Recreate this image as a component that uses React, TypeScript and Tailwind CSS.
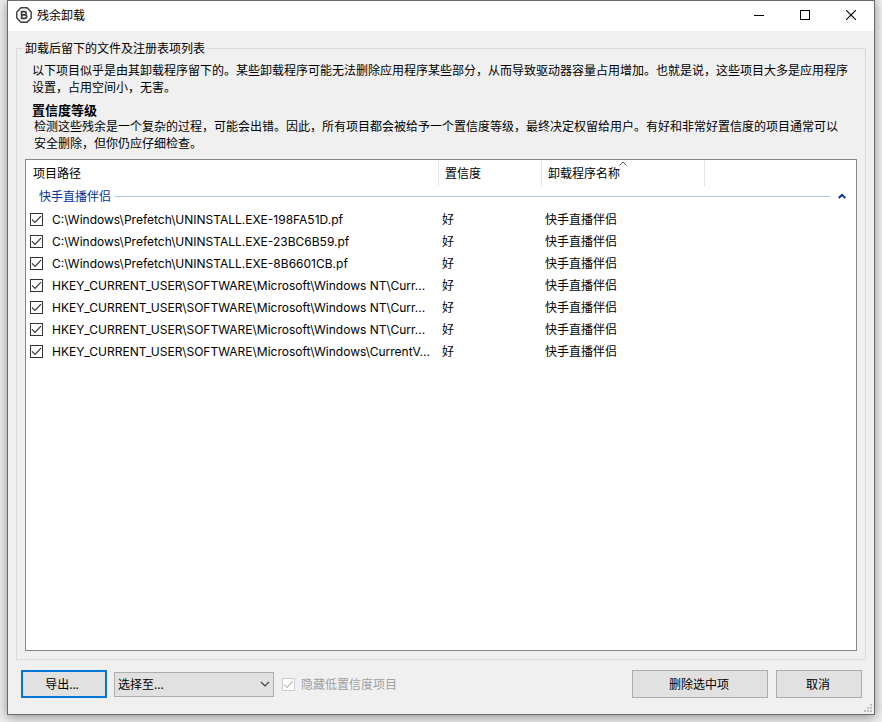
import * as React from "react";

type Leftover = {
  id: number;
  path: string;
  confidence: string;
  uninstaller: string;
};

const GROUP = "快手直播伴侣";

const LEFTOVERS: Leftover[] = [
  { id: 1, path: "C:\\Windows\\Prefetch\\UNINSTALL.EXE-198FA51D.pf", confidence: "好", uninstaller: GROUP },
  { id: 2, path: "C:\\Windows\\Prefetch\\UNINSTALL.EXE-23BC6B59.pf", confidence: "好", uninstaller: GROUP },
  { id: 3, path: "C:\\Windows\\Prefetch\\UNINSTALL.EXE-8B6601CB.pf", confidence: "好", uninstaller: GROUP },
  { id: 4, path: "HKEY_CURRENT_USER\\SOFTWARE\\Microsoft\\Windows NT\\Curr...", confidence: "好", uninstaller: GROUP },
  { id: 5, path: "HKEY_CURRENT_USER\\SOFTWARE\\Microsoft\\Windows NT\\Curr...", confidence: "好", uninstaller: GROUP },
  { id: 6, path: "HKEY_CURRENT_USER\\SOFTWARE\\Microsoft\\Windows NT\\Curr...", confidence: "好", uninstaller: GROUP },
  { id: 7, path: "HKEY_CURRENT_USER\\SOFTWARE\\Microsoft\\Windows\\CurrentV...", confidence: "好", uninstaller: GROUP },
];

function AppIcon() {
  return (
    <svg width="16" height="16" viewBox="0 0 16 16" fill="none" aria-hidden="true">
      <path d="M5 .8h6L15.2 5v6L11 15.2H5L.8 11V5z" stroke="#3a3a3a" strokeWidth="1.4" />
      <path
        d="M5.6 4.7h3.1a1.5 1.5 0 0 1 0 3.1H5.6zM5.6 7.9h3.4a1.7 1.7 0 0 1 0 3.4H5.6z"
        stroke="#3a3a3a"
        strokeWidth="1.7"
      />
    </svg>
  );
}

function CheckBox(props: React.ComponentProps<"input">) {
  return (
    <span className="relative flex size-[13px] shrink-0">
      <input
        type="checkbox"
        className="peer size-[13px] appearance-none border border-[#333] bg-white disabled:border-[#ccc]"
        {...props}
      />
      <svg
        className="pointer-events-none absolute inset-0 hidden text-[#333] peer-checked:block peer-disabled:text-[#bbb]"
        width="13"
        height="13"
        viewBox="0 0 13 13"
        fill="none"
        aria-hidden="true"
      >
        <path d="M2 6.3l3 3 6-6.1" stroke="currentColor" strokeWidth="1.2" />
      </svg>
    </span>
  );
}

function TitleBar() {
  return (
    <header className="flex h-[30px] shrink-0 items-center bg-white pb-[2px] pl-2">
      <AppIcon />
      <h1 className="pl-[5px] text-[12px]">残余卸载</h1>
      <div className="ml-auto flex h-full">
        <button type="button" aria-label="最小化" className="flex w-[46px] items-center justify-center">
          <svg width="10" height="10" viewBox="0 0 10 10" shapeRendering="crispEdges">
            <path d="M0 5.5h10" stroke="#000" />
          </svg>
        </button>
        <button type="button" aria-label="最大化" className="flex w-[46px] items-center justify-center">
          <svg width="10" height="10" viewBox="0 0 10 10" fill="none" shapeRendering="crispEdges">
            <path d="M.5.5h9v9h-9z" stroke="#000" />
          </svg>
        </button>
        <button type="button" aria-label="关闭" className="flex w-[46px] items-center justify-center">
          <svg width="10" height="10" viewBox="0 0 10 10">
            <path d="M0 0l10 10M10 0L0 10" stroke="#000" strokeWidth="1.1" />
          </svg>
        </button>
      </div>
    </header>
  );
}

function LeftoverTable() {
  const [selected, setSelected] = React.useState(() => LEFTOVERS.map((item) => item.id));

  const toggle = (id: number) =>
    setSelected((ids) => (ids.includes(id) ? ids.filter((x) => x !== id) : [...ids, id]));

  return (
    <div className="flex-1 overflow-hidden border border-[#828790] bg-white">
      <table className="w-full table-fixed border-collapse text-left">
        <colgroup>
          <col className="w-[413px]" />
          <col className="w-[103px]" />
          <col className="w-[163px]" />
          <col />
        </colgroup>
        <thead>
          <tr className="h-[26px]">
            <th className="p-0 font-normal">
              <div className="flex h-[26px] items-center border-r border-[#e5e5e5] pl-[7px]">项目路径</div>
            </th>
            <th className="p-0 font-normal">
              <div className="flex h-[26px] items-center border-r border-[#e5e5e5] pl-[6px]">置信度</div>
            </th>
            <th className="p-0 font-normal" aria-sort="ascending">
              <div className="relative flex h-[26px] items-center border-r border-[#e5e5e5] pl-[6px]">
                卸载程序名称
                <svg
                  className="absolute top-px left-1/2 -translate-x-1/2"
                  width="8"
                  height="5"
                  viewBox="0 0 8 5"
                  fill="none"
                >
                  <path d="M.5 4.5L4 1l3.5 3.5" stroke="#555" />
                </svg>
              </div>
            </th>
            <td className="p-0" />
          </tr>
        </thead>
        <tbody>
          <tr className="h-[22px]">
            <th colSpan={4} scope="colgroup" className="p-0 align-top font-normal">
              <div className="flex h-5 items-center gap-1 pr-[10px] pl-[13px]">
                <span className="text-[#003399]">{GROUP}</span>
                <span className="h-px flex-1 bg-[#b0c4de]" />
                <button type="button" aria-label="折叠" className="pl-1">
                  <svg width="8" height="6" viewBox="0 0 8 6" fill="none">
                    <path d="M.8 5L4 1.8 7.2 5" stroke="#003399" strokeWidth="2" />
                  </svg>
                </button>
              </div>
            </th>
          </tr>
          {LEFTOVERS.map((item) => (
            <tr key={item.id} className="h-[22px]">
              <td className="p-0">
                <label className="flex items-center gap-[9px] pl-1">
                  <CheckBox checked={selected.includes(item.id)} onChange={() => toggle(item.id)} />
                  <span className="pt-px font-['Inter','Noto_Sans_CJK_SC',sans-serif] whitespace-nowrap">
                    {item.path}
                  </span>
                </label>
              </td>
              <td className="p-0 pl-[3px]">{item.confidence}</td>
              <td className="p-0 pl-[3px]">{item.uninstaller}</td>
              <td className="p-0" />
            </tr>
          ))}
        </tbody>
      </table>
    </div>
  );
}

function Footer() {
  return (
    <footer className="flex shrink-0 items-center gap-2 pt-[10px] pr-3 pb-4 pl-[13px]">
      <div className="flex items-center gap-[7px]">
        <button type="button" className="h-7 w-[86px] border-2 border-[#0078d7] bg-[#e1e1e1] pr-1">
          导出...
        </button>
        <div className="relative">
          <select
            aria-label="选择至"
            className="block h-[25px] w-[160px] appearance-none border border-[#adadad] bg-[#e1e1e1] pl-[3px]"
          >
            <option>选择至...</option>
          </select>
          <svg
            className="pointer-events-none absolute top-[9px] right-1"
            width="10"
            height="7"
            viewBox="0 0 10 7"
            fill="none"
            aria-hidden="true"
          >
            <path d="M1 1l4 4 4-4" stroke="#444" strokeWidth="1.2" />
          </svg>
        </div>
        <label className="flex items-center gap-[6px] pl-px text-[#a0a0a0]">
          <CheckBox defaultChecked disabled />
          隐藏低置信度项目
        </label>
      </div>
      <button type="button" className="ml-auto h-7 w-[136px] border border-[#adadad] bg-[#e1e1e1] pr-[2px]">
        删除选中项
      </button>
      <button type="button" className="h-7 w-[86px] border border-[#adadad] bg-[#e1e1e1] pr-[2px]">
        取消
      </button>
    </footer>
  );
}

function ResizeGrip() {
  return (
    <svg
      className="absolute right-[2px] bottom-[2px]"
      width="8"
      height="8"
      viewBox="0 0 8 8"
      fill="#bfbfbf"
      shapeRendering="crispEdges"
      aria-hidden="true"
    >
      <path d="M6 0h2v2H6zM3 3h2v2H3zM6 3h2v2H6zM0 6h2v2H0zM3 6h2v2H3zM6 6h2v2H6z" />
    </svg>
  );
}

export default function App() {
  return (
    <div className="flex min-h-screen flex-col bg-[#eeeeee] px-[7px] pb-[7px] font-['Noto_Sans','Noto_Sans_CJK_SC',sans-serif] text-[12px] leading-[17px] text-black">
      <main className="relative flex flex-1 flex-col border border-[#6b6b6b] bg-[#f0f0f0] shadow-[0_2px_10px_rgba(0,0,0,0.4)]">
        <TitleBar />
        <section
          aria-labelledby="leftovers-title"
          className="mx-2 mt-[17px] flex flex-1 flex-col border border-[#dcdcdc] px-2 pb-2"
        >
          {/* Caption sits on the frame's top edge, like a group box */}
          <h2 id="leftovers-title" className="-mt-[9px] -ml-[2px] self-start bg-[#f0f0f0] px-[2px]">
            卸载后留下的文件及注册表项列表
          </h2>
          <p className="pt-[5px] pr-1 pl-[7px]">
            以下项目似乎是由其卸载程序留下的。某些卸载程序可能无法删除应用程序某些部分，从而导致驱动器容量占用增加。也就是说，这些项目大多是应用程序设置，占用空间小，无害。
          </p>
          <h3 className="pt-[6px] pl-[7px] text-[13px] leading-[16px] font-bold">置信度等级</h3>
          <p className="pr-3 pb-[7px] pl-[9px]">
            检测这些残余是一个复杂的过程，可能会出错。因此，所有项目都会被给予一个置信度等级，最终决定权留给用户。有好和非常好置信度的项目通常可以安全删除，但你仍应仔细检查。
          </p>
          <LeftoverTable />
        </section>
        <Footer />
        <ResizeGrip />
      </main>
    </div>
  );
}
